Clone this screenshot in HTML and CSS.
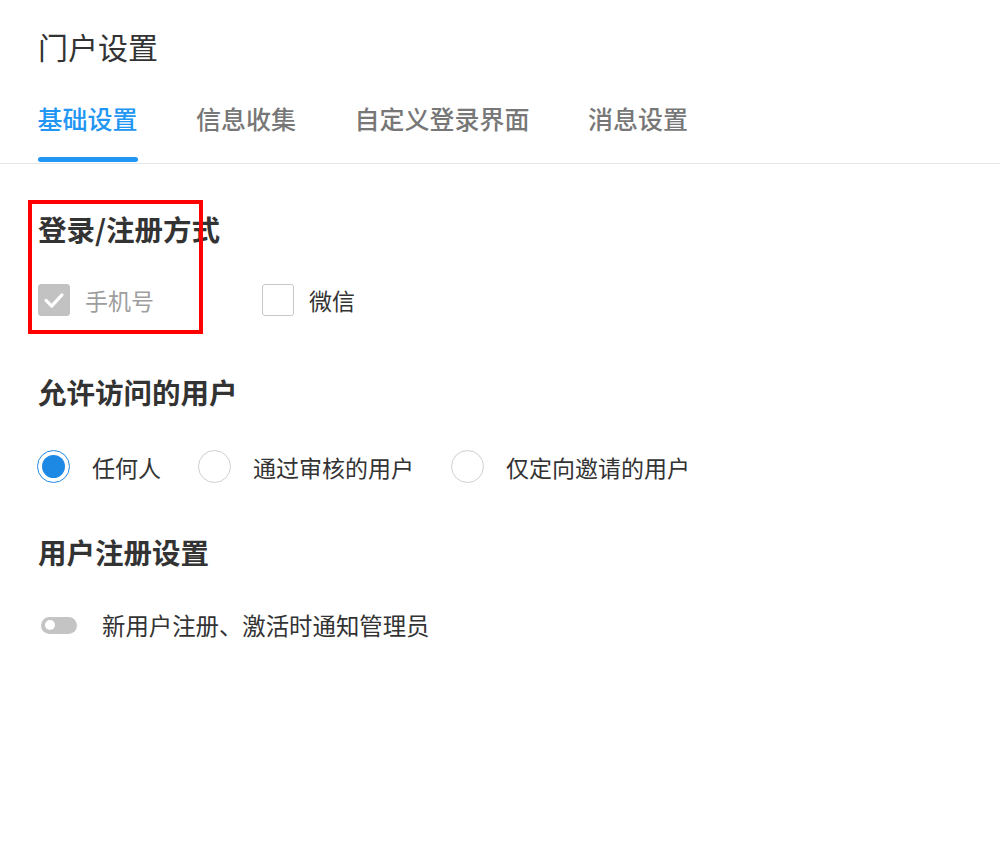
FILE: index.html
```html
<!DOCTYPE html>
<html lang="zh-CN">
<head>
<meta charset="utf-8">
<title>门户设置</title>
<link rel="stylesheet" href="styles.css">
</head>
<body>
<div class="page">
  <h1 class="page-title">门户设置</h1>
  <nav class="tabs">
    <div class="tab tab-active"><span class="tab-text">基础设置</span><span class="tab-ink"></span></div>
    <div class="tab"><span class="tab-text">信息收集</span><span class="tab-ink"></span></div>
    <div class="tab"><span class="tab-text">自定义登录界面</span><span class="tab-ink"></span></div>
    <div class="tab"><span class="tab-text">消息设置</span><span class="tab-ink"></span></div>
  </nav>

  <main class="content">
    <section class="section section-login">
      <h2 class="section-title">登录/注册方式</h2>
      <div class="options options-check">
        <label class="option">
          <span class="checkbox checkbox-disabled">
            <svg viewBox="0 0 32 32" width="32" height="32"><polyline points="7.5,16.5 13.5,22.5 24.5,10.5" fill="none" stroke="#fff" stroke-width="3.4" stroke-linecap="round" stroke-linejoin="round"/></svg>
          </span>
          <span class="option-label label-disabled">手机号</span>
        </label>
        <label class="option">
          <span class="checkbox"></span>
          <span class="option-label">微信</span>
        </label>
      </div>
      <div class="annotation"></div>
    </section>

    <section class="section section-access">
      <h2 class="section-title">允许访问的用户</h2>
      <div class="options options-radio">
        <label class="option option-radio">
          <span class="radio radio-checked"><span class="radio-dot"></span></span>
          <span class="option-label">任何人</span>
        </label>
        <label class="option option-radio">
          <span class="radio"></span>
          <span class="option-label">通过审核的用户</span>
        </label>
        <label class="option option-radio">
          <span class="radio"></span>
          <span class="option-label">仅定向邀请的用户</span>
        </label>
      </div>
    </section>

    <section class="section section-register">
      <h2 class="section-title">用户注册设置</h2>
      <div class="options options-switch">
        <label class="option option-switch">
          <span class="switch"><span class="switch-knob"></span></span>
          <span class="option-label label-wide">新用户注册、激活时通知管理员</span>
        </label>
      </div>
    </section>
  </main>
</div>
</body>
</html>
```

FILE: styles.css
```css
* { box-sizing: border-box; }
html, body {
  margin: 0;
  padding: 0;
  background: #fff;
}
body {
  font-family: "Noto Sans CJK SC", "Noto Sans", sans-serif;
  color: #333;
}
.page {
  width: 1000px;
  min-height: 854px;
}
.page-title {
  margin: 0;
  padding: 26px 0 0 38px;
  font-size: 30px;
  line-height: 40px;
  font-weight: 400;
  color: #333;
}
.tabs {
  display: flex;
  gap: 58.5px;
  margin-top: 34px;
  padding-left: 37.5px;
  border-bottom: 1px solid #e6e6e6;
}
.tab {
  display: flex;
  flex-direction: column;
  align-items: stretch;
}
.tab-text {
  font-size: 25px;
  line-height: 36px;
  color: #777;
  font-weight: 500;
}
.tab-ink {
  display: block;
  height: 5px;
  margin-top: 21px;
  margin-bottom: 1px;
  border-radius: 3px;
  background: transparent;
}
.tab-active .tab-text { color: #2196f3; }
.tab-active .tab-ink { background: #2196f3; }

.content {
  padding-left: 38px;
}
.section {
  position: relative;
}
.section-title {
  margin: 0;
  font-size: 28.5px;
  line-height: 40px;
  font-weight: 700;
  color: #333;
}
.section-login { padding-top: 45px; }
.section-access { padding-top: 56px; }
.section-register { padding-top: 49px; }

.options {
  display: flex;
  align-items: center;
}
.options-check { margin-top: 35px; gap: 108px; }
.options-radio { margin-top: 38px; gap: 37px; margin-left: -1px; }
.options-switch { margin-top: 37px; }

.option {
  display: flex;
  align-items: center;
  gap: 15px;
}
.option-radio { gap: 22px; }
.option-switch { gap: 25px; }

.option-label {
  font-size: 23px;
  line-height: 32px;
  color: #333;
}
.label-wide { font-size: 23.4px; }
.label-disabled { color: #9e9e9e; }

.checkbox {
  width: 32px;
  height: 32px;
  border: 1px solid #c8c8c8;
  border-radius: 3px;
  background: #fff;
  display: flex;
  align-items: center;
  justify-content: center;
}
.checkbox svg { display: block; }
.checkbox-disabled {
  background: #c2c2c2;
  border-color: #c2c2c2;
}

.radio {
  width: 33px;
  height: 33px;
  border-radius: 50%;
  border: 1px solid #cfcfcf;
  display: flex;
  align-items: center;
  justify-content: center;
}
.radio-checked { border-color: #1e88e5; }
.radio-dot {
  width: 23px;
  height: 23px;
  border-radius: 50%;
  background: #1e88e5;
}

.switch {
  width: 36px;
  height: 17px;
  margin-left: 3px;
  border-radius: 9px;
  background: #c4c4c4;
  display: flex;
  align-items: center;
  padding-left: 4px;
}
.switch-knob {
  width: 10px;
  height: 10px;
  border-radius: 50%;
  background: #fff;
}

.annotation {
  position: absolute;
  left: -10px;
  top: 36px;
  width: 175px;
  height: 134px;
  border: 4px solid #ff0000;
  pointer-events: none;
}
```
